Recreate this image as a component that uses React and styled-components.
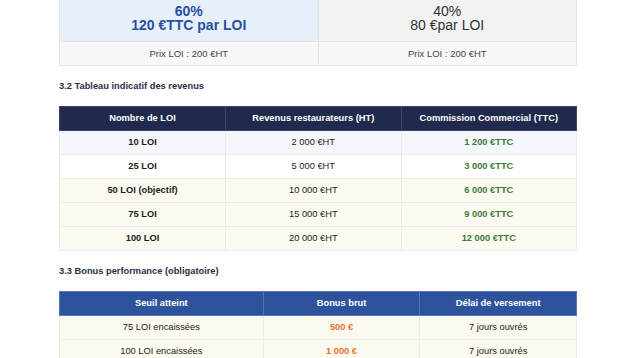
import React from "react";
import styled, { createGlobalStyle } from "styled-components";

const Global = createGlobalStyle`
  html, body { margin: 0; padding: 0; overflow: hidden; background: #ffffff; }
  body { font-family: "Liberation Sans", Arial, Helvetica, sans-serif; color: #222; }
`;

const Page = styled.div`
  width: 518px;
  margin: -10px auto 0;
`;

const Table = styled.table`
  width: 100%;
  border-collapse: collapse;
  table-layout: fixed;
  font-size: 9.3px;
`;

const SplitCell = styled.td`
  background: ${(p) => (p.$active ? "#e7effa" : "#f2f2f2")};
  color: ${(p) => (p.$active ? "#2b4f9f" : "#333")};
  font-weight: ${(p) => (p.$active ? 700 : 400)};
  font-size: 14px;
  line-height: 14px;
  text-align: center;
  padding: 13px 8px 9px;
  border: 1px solid #e3e3e3;
`;

const PriceCell = styled.td`
  background: #f8f8f8;
  color: #444;
  font-size: 9.5px;
  text-align: center;
  padding: 6px 8px;
  line-height: 11px;
  border: 1px solid #e3e3e3;
`;

const Heading = styled.h3`
  margin: 14px 0 14px;
  font-size: 9.3px;
  line-height: 12px;
  font-weight: 700;
  color: #2a2e47;
`;

const Th = styled.th`
  background: ${(p) => p.$bg};
  color: #fff;
  font-weight: 700;
  font-size: 9.3px;
  line-height: 11px;
  padding: 6px 8px;
  text-align: center;
  border: 1px solid ${(p) => p.$line};
  width: ${(p) => p.$w};
`;

const Tr = styled.tr`
  background: ${(p) => p.$bg};
`;

const Td = styled.td`
  text-align: center;
  padding: 6px 8px;
  line-height: 11px;
  font-size: 9.3px;
  border: 1px solid #ecebe6;
  color: ${(p) => p.$color || "#222"};
  font-weight: ${(p) => (p.$bold ? 700 : 400)};
`;

const revenus = [
  ["10 LOI", "2 000 €HT", "1 200 €TTC", "#f4f7fc"],
  ["25 LOI", "5 000 €HT", "3 000 €TTC", "#ffffff"],
  ["50 LOI (objectif)", "10 000 €HT", "6 000 €TTC", "#fcfaf0"],
  ["75 LOI", "15 000 €HT", "9 000 €TTC", "#fcfaf0"],
  ["100 LOI", "20 000 €HT", "12 000 €TTC", "#fcfaf0"],
];

const bonus = [
  ["75 LOI encaissées", "500 €", "7 jours ouvrés"],
  ["100 LOI encaissées", "1 000 €", "7 jours ouvrés"],
];

export default function App() {
  return (
    <>
      <Global />
      <Page>
        <Table>
          <tbody>
            <tr>
              <SplitCell $active>
                60%
                <br />
                120 €TTC par LOI
              </SplitCell>
              <SplitCell>
                40%
                <br />
                80 €par LOI
              </SplitCell>
            </tr>
            <tr>
              <PriceCell>Prix LOI : 200 €HT</PriceCell>
              <PriceCell>Prix LOI : 200 €HT</PriceCell>
            </tr>
          </tbody>
        </Table>

        <Heading>3.2 Tableau indicatif des revenus</Heading>
        <Table>
          <thead>
            <tr>
              <Th $bg="#1f2a4c" $line="#3b4668" $w="32%">Nombre de LOI</Th>
              <Th $bg="#1f2a4c" $line="#3b4668" $w="34%">Revenus restaurateurs (HT)</Th>
              <Th $bg="#1f2a4c" $line="#3b4668" $w="34%">Commission Commercial (TTC)</Th>
            </tr>
          </thead>
          <tbody>
            {revenus.map(([n, r, c, bg]) => (
              <Tr key={n} $bg={bg}>
                <Td $bold>{n}</Td>
                <Td>{r}</Td>
                <Td $bold $color="#3c7a3a">{c}</Td>
              </Tr>
            ))}
          </tbody>
        </Table>

        <Heading>3.3 Bonus performance (obligatoire)</Heading>
        <Table>
          <thead>
            <tr>
              <Th $bg="#2e539d" $line="#5876b6" $w="40%">Seuil atteint</Th>
              <Th $bg="#2e539d" $line="#5876b6" $w="30%">Bonus brut</Th>
              <Th $bg="#2e539d" $line="#5876b6" $w="30%">Délai de versement</Th>
            </tr>
          </thead>
          <tbody>
            {bonus.map(([s, b, d]) => (
              <Tr key={s} $bg="#fcf9ee">
                <Td>{s}</Td>
                <Td $bold $color="#e5732f">{b}</Td>
                <Td>{d}</Td>
              </Tr>
            ))}
          </tbody>
        </Table>
      </Page>
    </>
  );
}
